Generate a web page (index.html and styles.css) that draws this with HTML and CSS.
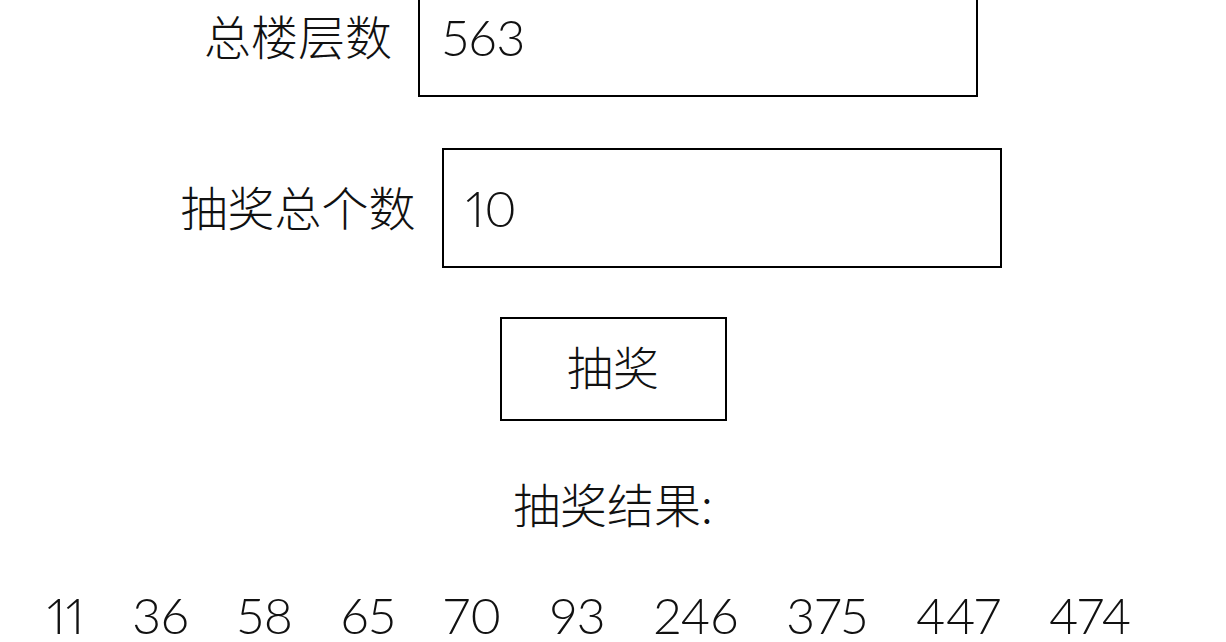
FILE: index.html
```html
<!DOCTYPE html>
<html>
<head>
  <title>抽奖</title>
  <link rel="stylesheet" href="styles.css">
</head>
<body>
  <div class="container">
    <div class="form-row">
      <label for="floorCount">总楼层数</label>
      <input type="text" id="floorCount" value="563">
    </div>
    <div class="form-row">
      <label for="prizeCount">抽奖总个数</label>
      <input type="text" id="prizeCount" value="10">
    </div>
    <div class="actions">
      <button type="button" id="drawBtn">抽奖</button>
    </div>
    <div class="result-title">抽奖结果:</div>
    <div class="result-list" id="resultList">
      <span>11</span><span>36</span><span>58</span><span>65</span><span>70</span><span>93</span><span>246</span><span>375</span><span>447</span><span>474</span>
    </div>
  </div>
</body>
</html>
```

FILE: styles.css
```css
body {
  margin: 0;
  font-family: "Montserrat", "Lato", "Noto Sans CJK SC", sans-serif;
  font-weight: 300;
  color: #111;
  background-color: #fff;
}

.container {
  margin-top: -23px;
}

.form-row {
  display: flex;
  justify-content: center;
  align-items: center;
  gap: 26px;
  padding-right: 44px;
  margin-bottom: 51px;
}

.form-row label {
  font-family: "Noto Sans CJK SC", sans-serif;
  font-weight: 300;
  font-size: 47px;
  line-height: 1;
  padding-bottom: 6px;
}

.form-row input {
  box-sizing: border-box;
  width: 560px;
  height: 120px;
  padding: 0 0 0 22px;
  border: 2px solid #000;
  border-radius: 0;
  font-family: "Lato", sans-serif;
  font-weight: 300;
  font-size: 50px;
  font-variant-numeric: proportional-nums;
  color: #111;
  outline: none;
}

.actions {
  display: flex;
  justify-content: center;
  margin-top: -2px;
  margin-bottom: 58px;
}

.actions button {
  box-sizing: border-box;
  width: 227px;
  height: 104px;
  padding: 0 0 8px;
  border: 2px solid #000;
  background-color: #fff;
  font-family: "Noto Sans CJK SC", sans-serif;
  font-weight: 300;
  font-size: 46px;
  color: #111;
  cursor: pointer;
}

.result-title {
  text-align: center;
  font-family: "Noto Sans CJK SC", sans-serif;
  font-size: 47px;
  line-height: 48px;
  margin-bottom: 63px;
}

.result-list {
  text-align: center;
  font-family: "Lato", sans-serif;
  font-size: 50px;
  line-height: 50px;
  font-variant-numeric: proportional-nums;
}

.result-list span {
  margin-right: 48px;
}
```
